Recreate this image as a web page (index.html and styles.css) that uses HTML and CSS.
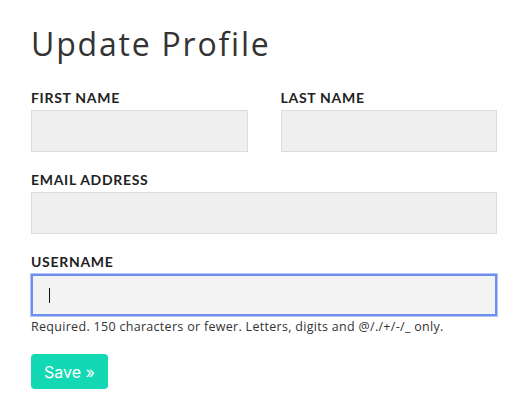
FILE: index.html
```html
<!DOCTYPE html>
<html>
<head>
<meta charset="utf-8">
<link rel="stylesheet" href="styles.css">
</head>
<body>
<main class="page">
  <h1 class="title">Update Profile</h1>
  <form class="form">
    <div class="row">
      <div class="field">
        <label class="label">First name</label>
        <div class="input"></div>
      </div>
      <div class="field">
        <label class="label">Last name</label>
        <div class="input"></div>
      </div>
    </div>
    <div class="field">
      <label class="label">Email address</label>
      <div class="input"></div>
    </div>
    <div class="field field-last">
      <label class="label">Username</label>
      <div class="input focus"><span class="caret"></span></div>
      <p class="help">Required. 150 characters or fewer. Letters, digits and @/./+/-/_ only.</p>
    </div>
    <div class="actions">
      <button type="button" class="btn">Save »</button>
    </div>
  </form>
</main>
</body>
</html>
```
FILE: styles.css
```css
html, body { margin: 0; padding: 0; background: #fff; }
.page {
  width: 466px;
  margin-left: 31px;
  padding-top: 22px;
  color: #333;
}
.title {
  margin: 0;
  font-family: "Open Sans", sans-serif;
  font-weight: 400;
  font-size: 32px;
  line-height: 44px;
  letter-spacing: 1.8px;
  color: #333;
}
.form {
  display: flex;
  flex-direction: column;
  margin-top: 23px;
}
.row {
  display: grid;
  grid-template-columns: 1fr 1fr;
  column-gap: 33px;
}
.field {
  display: flex;
  flex-direction: column;
  margin-bottom: 19px;
}
.label {
  font-family: "Lato", sans-serif;
  font-weight: 700;
  font-size: 14px;
  line-height: 18px;
  letter-spacing: 0.7px;
  text-transform: uppercase;
  color: #222;
  margin-bottom: 3px;
}
.input {
  height: 40px;
  background: #efefef;
  border: 1px solid #dcdcdc;
}
.input.focus {
  position: relative;
  border: 2px solid #6f8ff0;
  box-shadow: 0 0 0 1px #b3c4f6;
  height: 38px;
  background: #f3f3f3;
}
.caret {
  position: absolute;
  left: 16px;
  top: 12px;
  width: 1px;
  height: 15px;
  background: #111;
}
.help {
  margin: 2px 0 0;
  font-family: "Open Sans", sans-serif;
  font-size: 12.5px;
  line-height: 18px;
  letter-spacing: 0.3px;
  color: #333;
}
.field-last { margin-bottom: 18px; }
.actions { display: flex; }
.btn {
  font-family: "Inter", sans-serif;
  font-size: 16px;
  color: #fff;
  background: #12d8b4;
  border: none;
  border-radius: 4px;
  height: 35px;
  padding: 0 13px;
}
```
